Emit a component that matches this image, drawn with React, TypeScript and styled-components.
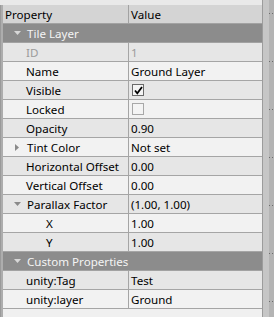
import React from 'react'
import styled, { createGlobalStyle, css } from 'styled-components'

const GlobalStyle = createGlobalStyle`
  html, body {
    margin: 0;
    padding: 0;
    background: #f0f0f0;
  }
  body {
    font-family: "Noto Sans", "Liberation Sans", sans-serif;
    font-size: 11.6px;
    color: #000000;
  }
`

const Frame = styled.div`
  display: flex;
  width: 274px;
  height: 317px;
  overflow: hidden;
`

const LeftEdge = styled.div`
  width: 3px;
  margin-top: 5px;
  background: #adadad;
  border-left: 1px solid #9a9a9a;
  box-sizing: border-box;
`

const Browser = styled.div`
  display: flex;
  flex-direction: column;
  width: 259px;
`

const TopStrip = styled.div`
  height: 5px;
  background: #e9e9e9;
  margin-left: -3px;
`

const HeaderRow = styled.div`
  display: grid;
  grid-template-columns: 126px 1fr;
  height: 18px;
  background: #d4d4d4;
  border-bottom: 1px solid #a2a2a2;
`

const HeaderCell = styled.div<{ $first?: boolean }>`
  display: flex;
  align-items: center;
  padding-left: 2px;
  ${p => p.$first && css`border-right: 1px solid #a2a2a2;`}
`

const GroupRow = styled.div`
  display: flex;
  align-items: center;
  height: 18px;
  background: #8c8c8c;
  color: #f4f4f4;
  border-bottom: 1px solid #a2a2a2;
`

const Row = styled.div<{ $alt: boolean }>`
  display: grid;
  grid-template-columns: 126px 1fr;
  height: 18px;
  background: ${p => (p.$alt ? '#e6e6e6' : '#f2f2f2')};
  border-bottom: 1px solid #a5a5a5;
`

const NameCell = styled.div<{ $indent: number; $disabled?: boolean }>`
  display: flex;
  align-items: center;
  padding-left: ${p => p.$indent}px;
  border-right: 1px solid #a5a5a5;
  white-space: nowrap;
  overflow: hidden;
  color: ${p => (p.$disabled ? '#9b9b9b' : '#000')};
`

const ValueCell = styled.div<{ $disabled?: boolean }>`
  display: flex;
  align-items: center;
  padding-left: 2px;
  white-space: nowrap;
  overflow: hidden;
  color: ${p => (p.$disabled ? '#9b9b9b' : '#000')};
`

const ArrowSlot = styled.span`
  display: inline-flex;
  justify-content: center;
  align-items: center;
  width: 16px;
  margin-left: 6px;
  margin-right: 2px;
`

const Check = styled.span<{ $on?: boolean }>`
  display: inline-flex;
  align-items: center;
  justify-content: center;
  box-sizing: border-box;
  width: 12px;
  height: 12px;
  margin-left: 1px;
  background: #f4f4f4;
  border: 1px solid ${p => (p.$on ? '#6a6a6a' : '#a8a8a8')};
`

const Filler = styled.div`
  flex: 1;
  background: #f0f0f0;
`

const Splitter = styled.div`
  display: flex;
  width: 12px;
  border-left: 1px solid #9c9c9c;
  box-sizing: border-box;
  background: linear-gradient(to right, #c6c6c6 0 6px, #b4b4b4 6px);
`

const GripColumn = styled.div`
  display: flex;
  flex-direction: column;
  gap: 47px;
  padding-top: 13px;
  padding-left: 6px;
`

const Grip = styled.div`
  display: flex;
  gap: 2px;
  height: 1px;
`

const GripDot = styled.span`
  width: 1px;
  height: 1px;
  background: #6c6c6c;
`

const Arrow = ({ dir, color }: { dir: 'down' | 'right'; color: string }) =>
  dir === 'down' ? (
    <svg width="7" height="4" viewBox="0 0 7 4">
      <path d="M0 0 H7 L3.5 4 Z" fill={color} />
    </svg>
  ) : (
    <svg width="4" height="7" viewBox="0 0 4 7">
      <path d="M0 0 V7 L4 3.5 Z" fill={color} />
    </svg>
  )

const CheckMark = () => (
  <svg width="9" height="9" viewBox="0 0 9 9">
    <path d="M1 4.5 L3.3 7.3 L8 1" stroke="#000" strokeWidth="1.8" fill="none" />
  </svg>
)

type Item =
  | { kind: 'group'; name: string }
  | {
      kind: 'prop'
      name: string
      value?: string
      check?: 'on' | 'off'
      depth?: number
      arrow?: 'down' | 'right'
      disabled?: boolean
    }

const items: Item[] = [
  { kind: 'group', name: 'Tile Layer' },
  { kind: 'prop', name: 'ID', value: '1', disabled: true },
  { kind: 'prop', name: 'Name', value: 'Ground Layer' },
  { kind: 'prop', name: 'Visible', check: 'on' },
  { kind: 'prop', name: 'Locked', check: 'off' },
  { kind: 'prop', name: 'Opacity', value: '0.90' },
  { kind: 'prop', name: 'Tint Color', value: 'Not set', arrow: 'right' },
  { kind: 'prop', name: 'Horizontal Offset', value: '0.00' },
  { kind: 'prop', name: 'Vertical Offset', value: '0.00' },
  { kind: 'prop', name: 'Parallax Factor', value: '(1.00, 1.00)', arrow: 'down' },
  { kind: 'prop', name: 'X', value: '1.00', depth: 1 },
  { kind: 'prop', name: 'Y', value: '1.00', depth: 1 },
  { kind: 'group', name: 'Custom Properties' },
  { kind: 'prop', name: 'unity:Tag', value: 'Test' },
  { kind: 'prop', name: 'unity:layer', value: 'Ground' },
]

const App = () => {
  return (
    <>
      <GlobalStyle />
      <Frame>
        <LeftEdge />
        <Browser>
          <TopStrip />
          <HeaderRow>
            <HeaderCell $first>Property</HeaderCell>
            <HeaderCell>Value</HeaderCell>
          </HeaderRow>
          {items.map((it, i) => {
            if (it.kind === 'group') {
              return (
                <GroupRow key={it.name}>
                  <ArrowSlot>
                    <Arrow dir="down" color="#d8d8d8" />
                  </ArrowSlot>
                  {it.name}
                </GroupRow>
              )
            }
            const alt = i % 2 === 1
            return (
              <Row key={it.name} $alt={alt}>
                <NameCell $indent={it.arrow ? 0 : 23 + (it.depth ?? 0) * 20} $disabled={it.disabled}>
                  {it.arrow && (
                    <ArrowSlot>
                      <Arrow dir={it.arrow} color="#8a8a8a" />
                    </ArrowSlot>
                  )}
                  {it.name}
                </NameCell>
                <ValueCell $disabled={it.disabled}>
                  {it.check ? (
                    <Check $on={it.check === 'on'}>{it.check === 'on' && <CheckMark />}</Check>
                  ) : (
                    it.value
                  )}
                </ValueCell>
              </Row>
            )
          })}
          <Filler />
        </Browser>
        <Splitter>
          <GripColumn>
            {Array.from({ length: 7 }).map((_, i) => (
              <Grip key={i}>
                <GripDot />
                <GripDot />
              </Grip>
            ))}
          </GripColumn>
        </Splitter>
      </Frame>
    </>
  )
}

export default App
